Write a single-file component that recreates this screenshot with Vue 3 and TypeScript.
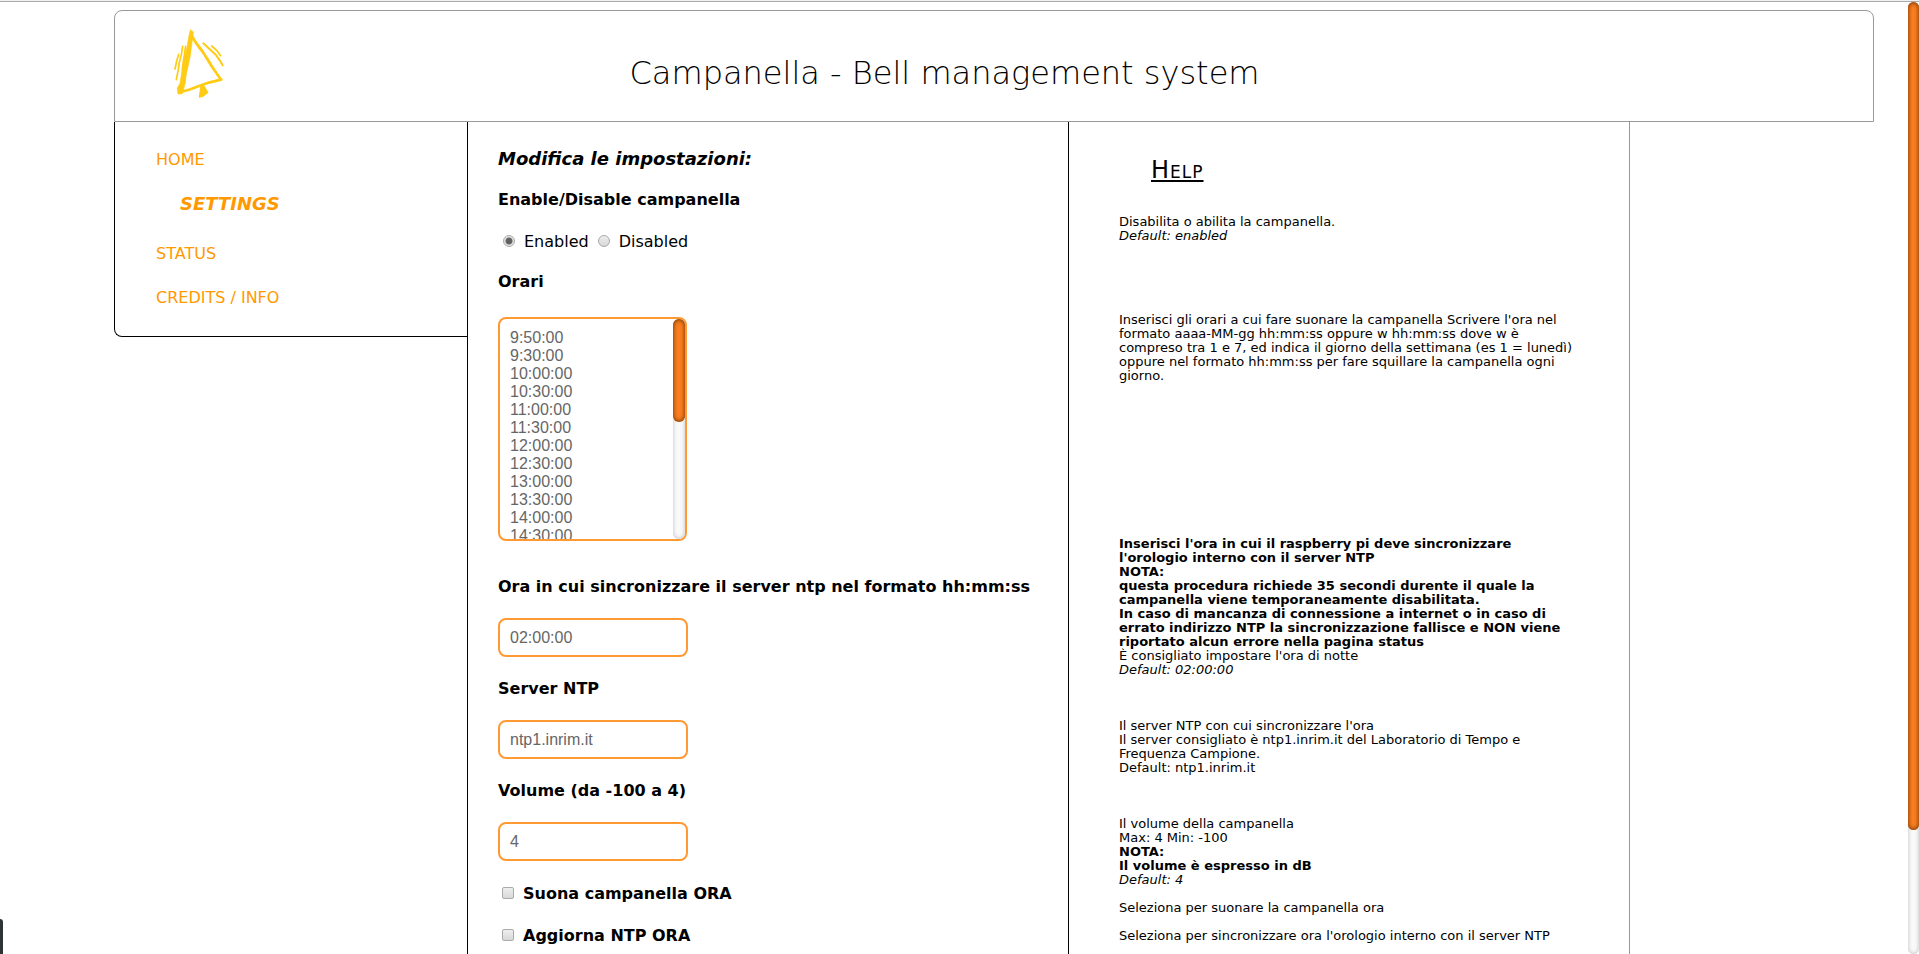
<script setup lang="ts">
import { ref } from 'vue'

interface NavItem {
  label: string
  href: string
  current?: boolean
}

interface HelpLine {
  text: string
  tone?: 'bold' | 'italic'
}

interface HelpSection {
  id: string
  lines: HelpLine[]
}

const navItems: NavItem[] = [
  { label: 'HOME', href: '#home' },
  { label: 'SETTINGS', href: '#settings', current: true },
  { label: 'STATUS', href: '#status' },
  { label: 'CREDITS / INFO', href: '#credits' },
]

const bellState = ref<'enabled' | 'disabled'>('enabled')
const times = ref(
  [
    '9:50:00', '9:30:00', '10:00:00', '10:30:00', '11:00:00', '11:30:00',
    '12:00:00', '12:30:00', '13:00:00', '13:30:00', '14:00:00', '14:30:00',
  ].join('\n'),
)
const syncTime = ref('02:00:00')
const ntpServer = ref('ntp1.inrim.it')
const volume = ref('4')
const ringNow = ref(false)
const syncNow = ref(false)

const helpSections: HelpSection[] = [
  {
    id: 'state',
    lines: [
      { text: 'Disabilita o abilita la campanella.' },
      { text: 'Default: enabled', tone: 'italic' },
    ],
  },
  {
    id: 'times',
    lines: [
      {
        text: "Inserisci gli orari a cui fare suonare la campanella Scrivere l'ora nel formato aaaa-MM-gg hh:mm:ss oppure w hh:mm:ss dove w è compreso tra 1 e 7, ed indica il giorno della settimana (es 1 = lunedì) oppure nel formato hh:mm:ss per fare squillare la campanella ogni giorno.",
      },
    ],
  },
  {
    id: 'sync',
    lines: [
      { text: "Inserisci l'ora in cui il raspberry pi deve sincronizzare l'orologio interno con il server NTP", tone: 'bold' },
      { text: 'NOTA:', tone: 'bold' },
      { text: 'questa procedura richiede 35 secondi durente il quale la campanella viene temporaneamente disabilitata.', tone: 'bold' },
      {
        text: 'In caso di mancanza di connessione a internet o in caso di errato indirizzo NTP la sincronizzazione fallisce e NON viene riportato alcun errore nella pagina status',
        tone: 'bold',
      },
      { text: "È consigliato impostare l'ora di notte" },
      { text: 'Default: 02:00:00', tone: 'italic' },
    ],
  },
  {
    id: 'server',
    lines: [
      { text: "Il server NTP con cui sincronizzare l'ora" },
      { text: 'Il server consigliato è ntp1.inrim.it del Laboratorio di Tempo e Frequenza Campione.' },
      { text: 'Default: ntp1.inrim.it' },
    ],
  },
  {
    id: 'volume',
    lines: [
      { text: 'Il volume della campanella' },
      { text: 'Max: 4 Min: -100' },
      { text: 'NOTA:', tone: 'bold' },
      { text: 'Il volume è espresso in dB', tone: 'bold' },
      { text: 'Default: 4', tone: 'italic' },
    ],
  },
  { id: 'ring', lines: [{ text: 'Seleziona per suonare la campanella ora' }] },
  { id: 'now', lines: [{ text: "Seleziona per sincronizzare ora l'orologio interno con il server NTP" }] },
]
</script>

<template>
  <div class="page">
    <header class="header">
      <svg class="logo" viewBox="220 84 156 213" fill="none" stroke="#ffcb14" stroke-linecap="round" stroke-linejoin="round" aria-hidden="true">
        <path d="M272 90 L267 112 L262 142 L254 172 L249 196 L245 225 L241 250 L233 264 L235 282 L248 281 L256 252 L260 223 L266 196 L272 167 L275 142 L279 114 L281 96 Z" fill="#ffcb14" stroke-width="2" />
        <path d="M258 139 L252 178 L248 207" stroke-width="5" />
        <path d="M274 104 L288 127 L309 155 L336 199 L363 238" stroke-width="8" />
        <path d="M280 112 L298 144 L323 174 L342 206" stroke-width="5" />
        <path d="M365 239 L330 247 L298 258 L268 269 L239 277" stroke-width="8" />
        <path d="M303 261 L299 292 L310 289 L325 278 L314 259 Z" fill="#ffcb14" stroke-width="3" />
        <path d="M249 139 L245 164 L239 187 L236 208 L230 239" stroke-width="5" />
        <path d="M237 163 L231 183 L226 207" stroke-width="5" />
        <path d="M311 130 L327 145 L349 165 L360 181 L369 196" stroke-width="6" />
        <path d="M336 138 L350 150 L363 167" stroke-width="5" />
      </svg>
      <h1 class="title">Campanella - Bell management system</h1>
    </header>

    <div class="columns">
      <nav class="nav" aria-label="Menu">
        <ul>
          <li v-for="item in navItems" :key="item.href" :class="{ current: item.current }">
            <a :href="item.href" :aria-current="item.current ? 'page' : undefined">{{ item.label }}</a>
          </li>
        </ul>
      </nav>

      <main class="settings">
        <form @submit.prevent>
          <h2>Modifica le impostazioni:</h2>

          <div id="state-label" class="label">Enable/Disable campanella</div>
          <div class="radios" role="radiogroup" aria-labelledby="state-label">
            <label><input v-model="bellState" type="radio" name="state" value="enabled" />Enabled</label>
            <label><input v-model="bellState" type="radio" name="state" value="disabled" />Disabled</label>
          </div>

          <label class="label" for="times">Orari</label>
          <div class="times">
            <textarea id="times" v-model="times" class="field" spellcheck="false"></textarea>
            <div class="bar"><div class="thumb"></div></div>
          </div>

          <label class="label compact" for="sync-time">Ora in cui sincronizzare il server ntp nel formato hh:mm:ss</label>
          <input id="sync-time" v-model="syncTime" class="field" type="text" />

          <label class="label compact" for="ntp-server">Server NTP</label>
          <input id="ntp-server" v-model="ntpServer" class="field" type="text" />

          <label class="label compact" for="volume">Volume (da -100 a 4)</label>
          <input id="volume" v-model="volume" class="field" type="text" />

          <label class="check"><input v-model="ringNow" type="checkbox" />Suona campanella ORA</label>
          <label class="check"><input v-model="syncNow" type="checkbox" />Aggiorna NTP ORA</label>
        </form>
      </main>

      <aside class="help">
        <h2>Help</h2>
        <section v-for="section in helpSections" :key="section.id" :class="section.id">
          <p v-for="line in section.lines" :key="line.text" :class="line.tone">{{ line.text }}</p>
        </section>
      </aside>
    </div>

    <div class="bar page-bar"><div class="thumb"></div></div>
    <div class="edge-tab"></div>
  </div>
</template>

<style>
body {
  margin: 0;
  background: #fff;
  overflow: hidden;
}
</style>

<style scoped>
.page {
  box-sizing: border-box;
  display: flex;
  flex-direction: column;
  height: 100vh;
  overflow: hidden;
  padding: 9px 45px 0 114px;
  border-top: 1px solid #f0f0f0;
  box-shadow: inset 0 1px #aaa;
  color: #000;
  font: 16px/19px "DejaVu Sans", sans-serif;
}

h1,
h2,
p,
ul {
  margin: 0;
  padding: 0;
}

.header {
  display: flex;
  align-items: flex-start;
  flex: none;
  padding: 17px 209px 22px 58px;
  border: 1px solid #999;
  border-radius: 8px 8px 0 0;
}

.logo {
  flex: none;
  width: 52px;
  height: 71px;
}

.title {
  flex: 1;
  margin-top: 26px;
  text-align: center;
  font-size: 32px;
  line-height: 38px;
  font-weight: 200;
}

.columns {
  flex: 1 0 auto;
  display: grid;
  grid-template-columns: 353fr 602fr 561fr 244fr;
}

.nav {
  align-self: start;
  padding: 28px 20px 29px 41px;
  border: solid #000;
  border-width: 0 0 1px 1px;
  border-radius: 0 0 0 8px;
}

.nav ul {
  display: flex;
  flex-direction: column;
  gap: 25px;
  list-style: none;
}

.nav a {
  color: #ff9900;
  text-decoration: none;
}

.nav .current {
  padding: 0 0 6px 24px;
  font-size: 18px;
  font-weight: bold;
  font-style: italic;
}

.settings {
  padding: 26px 30px 0;
  border: solid #000;
  border-width: 0 1px;
}

.settings form {
  display: flex;
  flex-direction: column;
  align-items: flex-start;
}

.settings h2 {
  margin-bottom: 20px;
  font-size: 18px;
  line-height: 22px;
  font-style: italic;
}

.label {
  display: block;
  margin-bottom: 26px;
  font-weight: bold;
}

.label.compact {
  margin-bottom: 22px;
}

.radios {
  display: flex;
  gap: 9px;
  margin: -3px 0 21px 5px;
}

.radios label,
.check {
  display: flex;
  align-items: center;
  gap: 9px;
}

.radios input,
.check input {
  appearance: none;
  box-sizing: border-box;
  flex: none;
  width: 12px;
  height: 12px;
  margin: 0 0 2px;
  border: 1px solid #aaa;
  background: linear-gradient(#eee, #d8d8d8);
}

.radios input {
  border-radius: 50%;
}

.radios input:checked {
  background: radial-gradient(circle, #606060 0 2px, #666 3px, #e4e4e4 4px);
}

.check {
  margin: 1px 0 22px 4px;
  font-weight: bold;
}

.check input {
  border-radius: 2px;
}

.field {
  box-sizing: border-box;
  display: block;
  width: 190px;
  height: 39px;
  margin: 0 0 22px;
  padding: 8px 10px;
  border: 2px solid #ff9933;
  border-radius: 8px;
  outline: none;
  background: #fff;
  color: #666;
  font: 16px/18px "Liberation Sans", Arial, sans-serif;
}

.times {
  position: relative;
  margin-bottom: 36px;
}

.settings .times .field {
  width: 189px;
  height: 224px;
  margin: 0;
  padding: 10px;
  overflow: hidden;
  resize: none;
}

.bar {
  position: absolute;
  top: 2px;
  right: 2px;
  bottom: 2px;
  width: 12px;
  border-radius: 6px;
  background: #fafafa;
  box-shadow: inset 0 0 4px #bbb;
}

.thumb {
  height: 47%;
  border-radius: 6px;
  background: #fd7f20;
  box-shadow: inset 0 0 5px #5a2800;
}

.page-bar {
  position: fixed;
  right: 0;
  bottom: 0;
  width: 11px;
}

.page-bar .thumb {
  height: 87%;
}

.edge-tab {
  position: fixed;
  left: 0;
  bottom: 0;
  width: 3px;
  height: 35px;
  border-radius: 0 3px 0 0;
  background: #2e3436;
}

.help {
  padding: 34px 50px 0;
  border-right: 1px solid #999;
  font-size: 13px;
  line-height: 14px;
}

.help h2 {
  width: max-content;
  margin: 0 0 31px 32px;
  font-size: 24px;
  line-height: 28px;
  font-weight: 400;
  font-variant: small-caps;
  letter-spacing: 1px;
  text-decoration: underline;
}

.help section {
  margin-bottom: 14px;
}

.help .state {
  margin-bottom: 70px;
}

.help .times {
  margin-bottom: 154px;
}

.help .sync,
.help .server {
  margin-bottom: 42px;
}

.bold {
  font-weight: bold;
}

.italic {
  font-style: italic;
}
</style>
